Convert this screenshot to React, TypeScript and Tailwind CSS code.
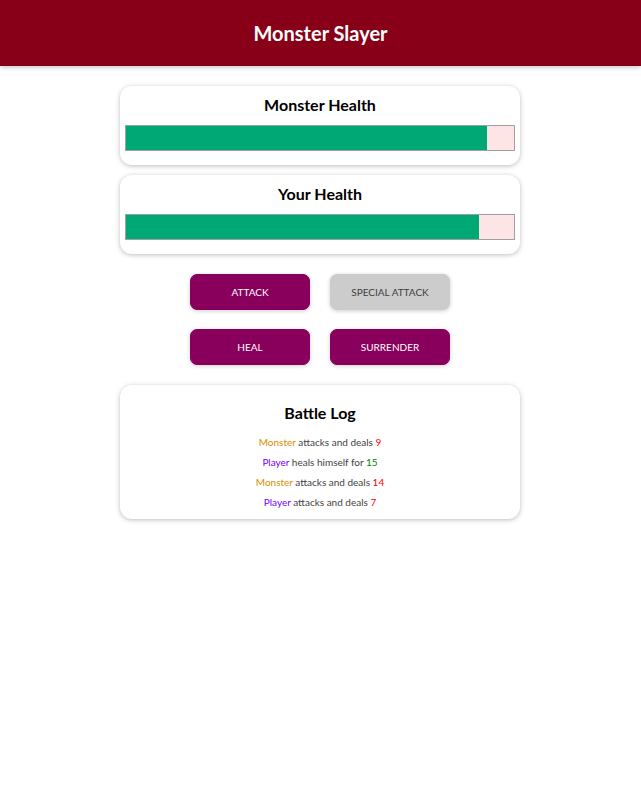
import React from "react";

const font = { fontFamily: "Lato, 'Noto Sans', sans-serif" };

function HealthCard({ title, value }: { title: string; value: number }) {
  return (
    <section className="w-[400px] mx-auto bg-white rounded-[12px] shadow-[0_1px_5px_rgba(0,0,0,0.26)] px-[5px] pt-[9px] pb-[14px]">
      <h2 className="text-[16px] leading-[20px] font-bold text-black text-center mb-[10px]">{title}</h2>
      <div className="h-[26px] border border-[#a0a0a0] bg-[#fde5e5] w-full">
        <div className="h-full bg-[#00a876]" style={{ width: `${value}%` }} />
      </div>
    </section>
  );
}

function Btn({ children, disabled }: { children: React.ReactNode; disabled?: boolean }) {
  return (
    <button
      className={
        disabled
          ? "w-[120px] h-[36px] rounded-[7px] bg-[#cccccc] border border-[#cccccc] text-[#3f3f3f] text-[10px] uppercase shadow-[0_1px_4px_rgba(0,0,0,0.2)]"
          : "w-[120px] h-[36px] rounded-[7px] bg-[#88005b] border border-[#88005b] text-white text-[10px] uppercase shadow-[0_1px_4px_rgba(0,0,0,0.2)]"
      }
    >
      {children}
    </button>
  );
}

export default function App() {
  return (
    <div className="min-h-[808px] bg-white" style={font}>
      <header className="h-[66px] bg-[#880017] flex items-center justify-center shadow-[0_1px_5px_rgba(0,0,0,0.26)]">
        <h1 className="text-white text-[20px] font-bold">Monster Slayer</h1>
      </header>
      <main className="w-[640px]">
        <div className="mt-[20px] flex flex-col gap-[10px]">
          <HealthCard title="Monster Health" value={93} />
          <HealthCard title="Your Health" value={91} />
        </div>
        <div className="mt-[20px] flex flex-col items-center gap-[19px]">
          <div className="flex gap-[20px]">
            <Btn>Attack</Btn>
            <Btn disabled>Special Attack</Btn>
          </div>
          <div className="flex gap-[20px]">
            <Btn>Heal</Btn>
            <Btn>Surrender</Btn>
          </div>
        </div>
        <section className="mt-[20px] w-[400px] mx-auto bg-white rounded-[12px] shadow-[0_1px_5px_rgba(0,0,0,0.26)] pt-[18px] pb-[9px] text-center">
          <h2 className="text-[16px] leading-[20px] font-bold text-black mb-[12px]">Battle Log</h2>
          <ul className="flex flex-col gap-[5px] text-[10px] leading-[15px] text-[#3f3f3f]">
            <li>
              <span className="text-[#da8d00]">Monster</span> attacks and deals <span className="text-[#ff0000]">9</span>
            </li>
            <li>
              <span className="text-[#7700ff]">Player</span> heals himself for <span className="text-[#008000]">15</span>
            </li>
            <li>
              <span className="text-[#da8d00]">Monster</span> attacks and deals <span className="text-[#ff0000]">14</span>
            </li>
            <li>
              <span className="text-[#7700ff]">Player</span> attacks and deals <span className="text-[#ff0000]">7</span>
            </li>
          </ul>
        </section>
      </main>
    </div>
  );
}
